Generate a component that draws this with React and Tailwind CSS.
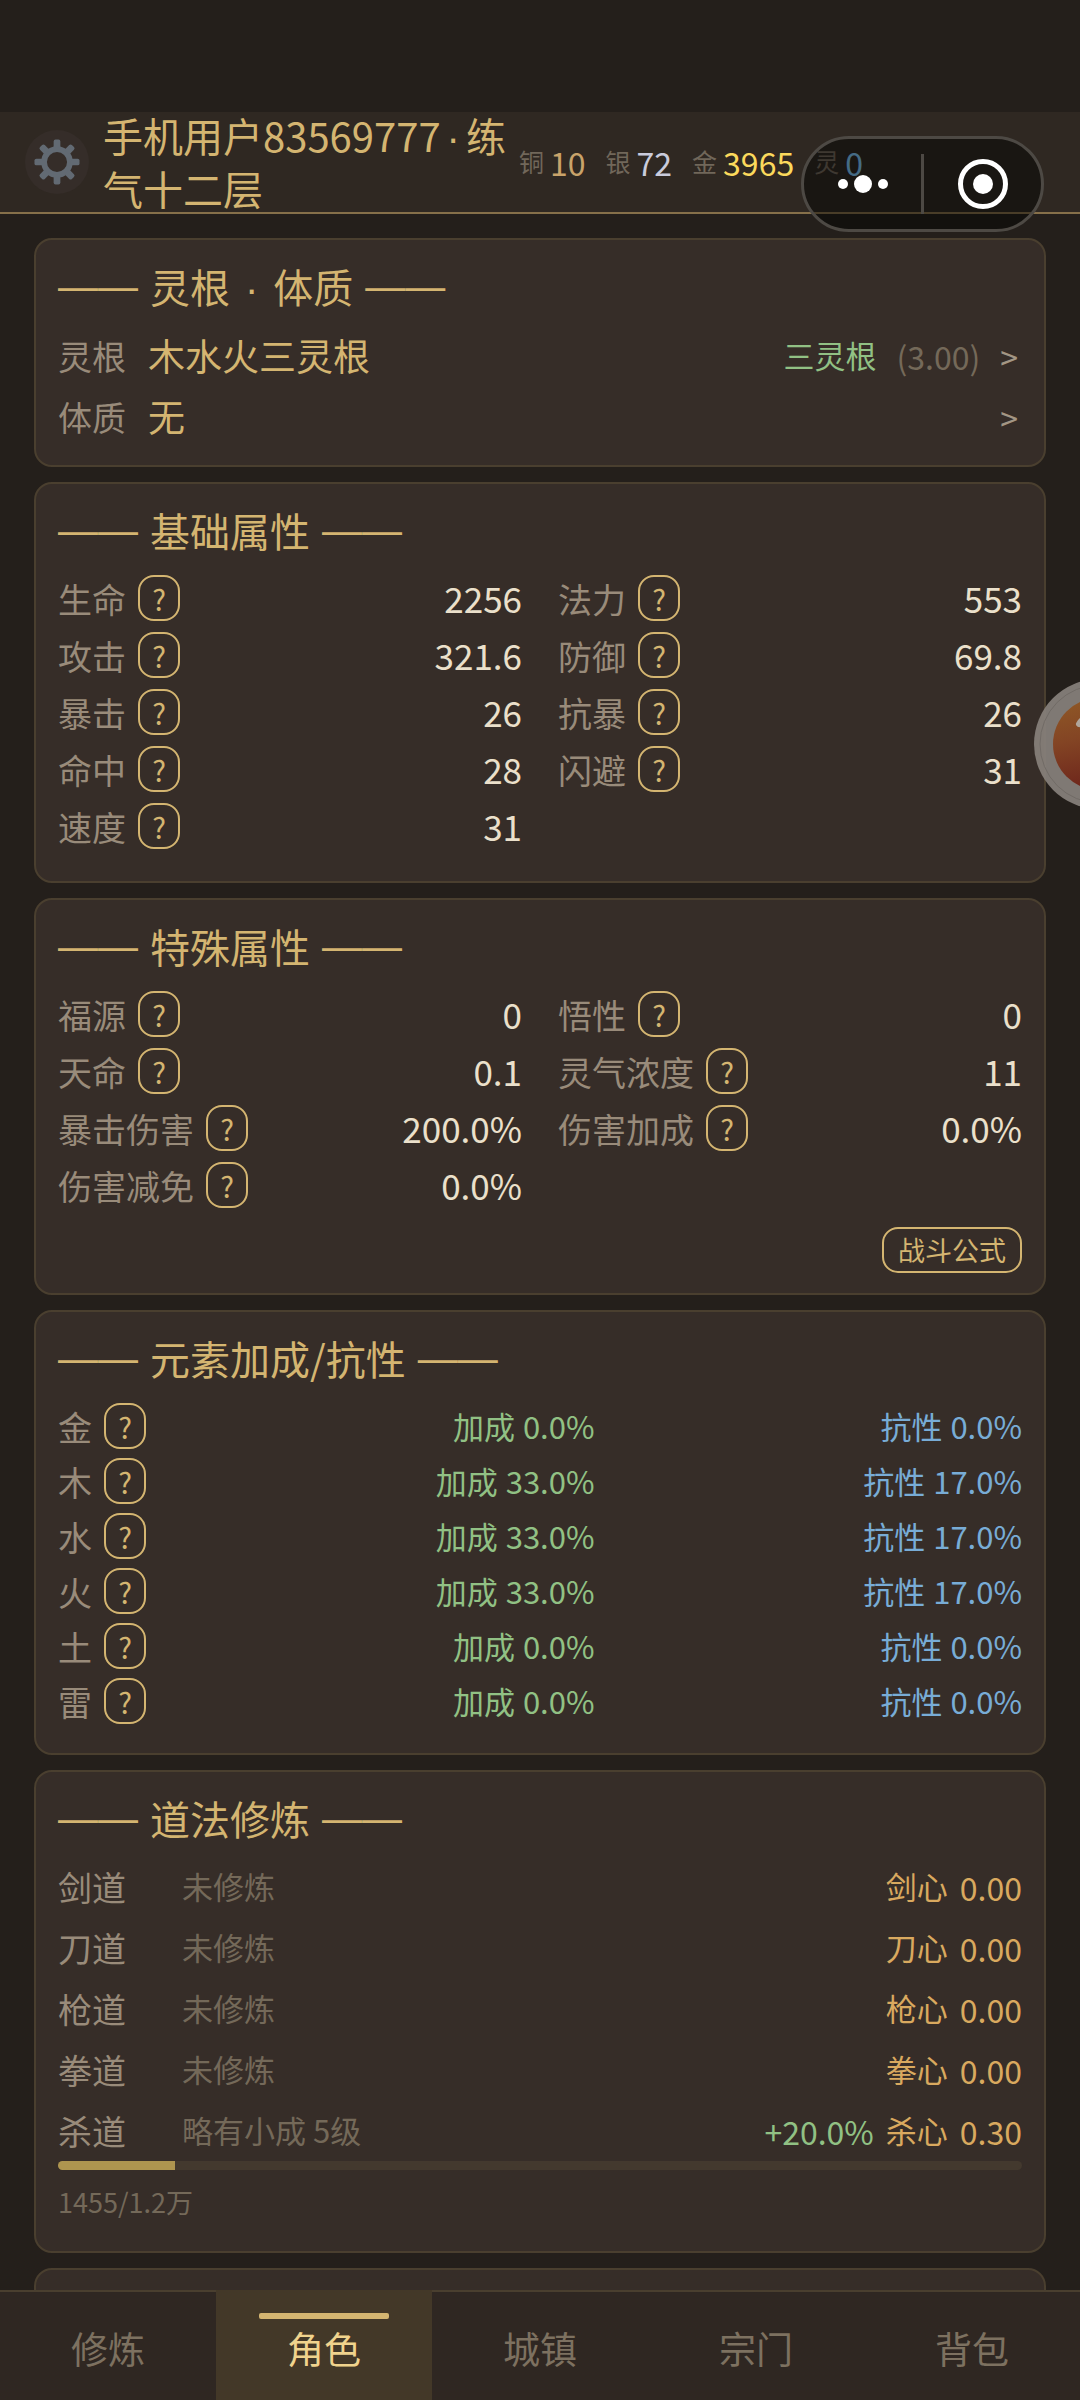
const CURRENCIES = [
  { label: "铜", value: "10", color: "text-[#c9a36a]" },
  { label: "银", value: "72", color: "text-[#c9cbdc]" },
  { label: "金", value: "3965", color: "text-[#fbd95c]" },
  { label: "灵", value: "0", color: "text-[#7ec4f0]" },
];

const BASE_STATS = [
  ["生命", "2256"], ["法力", "553"],
  ["攻击", "321.6"], ["防御", "69.8"],
  ["暴击", "26"], ["抗暴", "26"],
  ["命中", "28"], ["闪避", "31"],
  ["速度", "31"],
];

const SPECIAL_STATS = [
  ["福源", "0"], ["悟性", "0"],
  ["天命", "0.1"], ["灵气浓度", "11"],
  ["暴击伤害", "200.0%"], ["伤害加成", "0.0%"],
  ["伤害减免", "0.0%"],
];

const ELEMENTS = [
  { name: "金", bonus: "0.0%", resist: "0.0%" },
  { name: "木", bonus: "33.0%", resist: "17.0%" },
  { name: "水", bonus: "33.0%", resist: "17.0%" },
  { name: "火", bonus: "33.0%", resist: "17.0%" },
  { name: "土", bonus: "0.0%", resist: "0.0%" },
  { name: "雷", bonus: "0.0%", resist: "0.0%" },
];

const PATHS = [
  { name: "剑道", level: "未修炼", heart: "剑心", value: "0.00" },
  { name: "刀道", level: "未修炼", heart: "刀心", value: "0.00" },
  { name: "枪道", level: "未修炼", heart: "枪心", value: "0.00" },
  { name: "拳道", level: "未修炼", heart: "拳心", value: "0.00" },
  { name: "杀道", level: "略有小成 5级", heart: "杀心", value: "0.30", bonus: "+20.0%" },
];

const TABS = ["修炼", "角色", "城镇", "宗门", "背包"];

function GearIcon() {
  return (
    <svg viewBox="-24 -24 48 48" className="w-[46px] h-[46px]" aria-hidden="true">
      <circle r="13.5" fill="none" stroke="#626a73" strokeWidth="6" />
      {[0, 45, 90, 135, 180, 225, 270, 315].map((deg) => (
        <rect key={deg} x="-3.5" y="-23.5" width="7" height="9" rx="2" fill="#626a73" transform={`rotate(${deg})`} />
      ))}
    </svg>
  );
}

// The CJK font draws a wide middle dot, so it comes from the Latin one
function Dot() {
  return <span className="mx-[6px] leading-none font-['Liberation_Sans',sans-serif]">·</span>;
}

function Dash() {
  return <span className="font-['Liberation_Sans',sans-serif]">——</span>;
}

function Header() {
  return (
    <header className="h-[102px] shrink-0 flex items-center pl-[25px] bg-[#2f2822] border-b-2 border-[#86704a]">
      <button aria-label="设置" className="w-16 h-16 shrink-0 rounded-full bg-[#352d29] flex items-center justify-center">
        <GearIcon />
      </button>
      <h1 className="w-[404px] ml-[14px] text-[40px] leading-[53px] text-[#d4b571]">
        手机用户83569777<Dot />练气十二层
      </h1>
      <ul className="ml-3 flex items-center gap-5">
        {CURRENCIES.map((c) => (
          <li key={c.label} className="flex items-center gap-[6px]">
            <span className="text-[25px] text-[#71675a]">{c.label}</span>
            <span className={`text-[32px] ${c.color}`}>{c.value}</span>
          </li>
        ))}
      </ul>
    </header>
  );
}

// Host app's menu / close pill, floats above the page
function Capsule() {
  return (
    <div className="absolute top-[136px] right-9 w-[243px] h-24 rounded-full border-[3px] border-[#4d4944] bg-black/45 flex items-center">
      <button aria-label="更多" className="flex-1 flex items-center justify-center gap-[6px]">
        <span className="w-[10px] h-[10px] rounded-full bg-white" />
        <span className="w-[18px] h-[18px] rounded-full bg-white" />
        <span className="w-[10px] h-[10px] rounded-full bg-white" />
      </button>
      <span className="w-[3px] h-[60px] bg-[#4d4944]" />
      <button aria-label="关闭" className="flex-1 flex items-center justify-center">
        <span className="w-[50px] h-[50px] rounded-full border-[5px] border-white flex items-center justify-center">
          <span className="w-5 h-5 rounded-full bg-white" />
        </span>
      </button>
    </div>
  );
}

function FloatingBall() {
  return (
    <button aria-label="悬浮球" className="absolute top-[679px] -right-[84px] w-[130px] h-[130px]">
      <svg viewBox="0 0 130 130" className="w-full h-full" aria-hidden="true">
        <defs>
          <linearGradient id="ball" x1="0.2" y1="0" x2="0.4" y2="1">
            <stop offset="0" stopColor="#8f5826" />
            <stop offset="0.45" stopColor="#834424" />
            <stop offset="1" stopColor="#6c241b" />
          </linearGradient>
        </defs>
        <circle cx="65" cy="65" r="65" fill="#86807b" fillOpacity="0.93" />
        <circle cx="65" cy="65" r="59" fill="none" stroke="#716b66" />
        <circle cx="65" cy="65" r="46" fill="url(#ball)" />
        <path d="M45 45 Q47 41 52 39" fill="none" stroke="#b0a69c" strokeWidth="6" strokeLinecap="round" />
      </svg>
    </button>
  );
}

function Card({ title, children }) {
  return (
    <section className="mb-[15px] px-[22px] py-5 shrink-0 rounded-[18px] border-2 border-[#4a3f2f] bg-[#362d28]">
      <h2 className="mb-[19px] flex gap-3 text-[40px] leading-[52px] text-[#d4b571]">
        <Dash />
        <span>{title}</span>
        <Dash />
      </h2>
      {children}
    </section>
  );
}

function Help({ name }) {
  return (
    <button aria-label={`${name}说明`} className="w-[42px] h-[46px] rounded-[16px] border-2 border-[#d4b571] text-[29px] leading-[40px] text-[#d4b571]">
      ?
    </button>
  );
}

function StatGrid({ stats }) {
  return (
    <dl className="grid grid-cols-2 gap-x-9 gap-y-[11px] pb-3">
      {stats.map(([name, value]) => (
        <div key={name} className="h-[46px] flex items-center justify-between">
          <dt className="flex items-center gap-3 text-[34px] text-[#998b7a]">
            {name}
            <Help name={name} />
          </dt>
          <dd className="text-[35px] text-[#ebe0cb]">{value}</dd>
        </div>
      ))}
    </dl>
  );
}

function RootCard() {
  return (
    <Card title={<>灵根 <Dot /> 体质</>}>
      <div className="flex flex-col gap-2">
        <button className="h-[53px] flex items-center pr-1 pb-1">
          <span className="w-[90px] text-left text-[34px] text-[#998b7a]">灵根</span>
          <span className="text-[37px] text-[#d4b571]">木水火三灵根</span>
          <span className="ml-auto text-[31px] text-[#91c184]">三灵根</span>
          <span className="ml-5 text-[32px] text-[#746959]">(3.00)</span>
          <span className="ml-5 text-[32px] text-[#a39684]">&gt;</span>
        </button>
        <button className="h-[53px] flex items-center pr-1 pb-1">
          <span className="w-[90px] text-left text-[34px] text-[#998b7a]">体质</span>
          <span className="text-[37px] text-[#d4b571]">无</span>
          <span className="ml-auto text-[32px] text-[#a39684]">&gt;</span>
        </button>
      </div>
    </Card>
  );
}

function ElementCard() {
  return (
    <Card title="元素加成/抗性">
      <ul className="flex flex-col gap-[9px] pb-[9px]">
        {ELEMENTS.map((el) => (
          <li key={el.name} className="h-[46px] flex items-center justify-between text-[31px]">
            <span className="w-[109px] flex items-center gap-3 text-[34px] text-[#998b7a]">
              {el.name}
              <Help name={el.name} />
            </span>
            <span className="flex gap-2 text-[#91c184]">
              <span>加成</span>
              <span>{el.bonus}</span>
            </span>
            <span className="flex gap-2 text-[#78acd6]">
              <span>抗性</span>
              <span>{el.resist}</span>
            </span>
          </li>
        ))}
      </ul>
    </Card>
  );
}

function PathCard() {
  const exp = 1455;
  const expMax = 12000;

  return (
    <Card title="道法修炼">
      <ul className="flex flex-col gap-3">
        {PATHS.map((p) => (
          <li key={p.name} className="h-[49px] flex items-center pb-[2px] text-[31px]">
            <span className="w-[124px] text-[34px] text-[#998b7a]">{p.name}</span>
            <span className="text-[#746959]">{p.level}</span>
            <span className="ml-auto flex items-center gap-3">
              {p.bonus && <span className="text-[32px] text-[#91c184]">{p.bonus}</span>}
              <span className="text-[#d9a95f]">{p.heart}</span>
              <span className="text-[32px] text-[#d9a95f]">{p.value}</span>
            </span>
          </li>
        ))}
      </ul>
      <div role="progressbar" aria-valuenow={exp} aria-valuemax={expMax} aria-label="杀道进度" className="mt-[5px] h-[9px] rounded-full bg-[#43392e] overflow-hidden">
        <div className="h-full bg-[#ae954f]" style={{ width: `${(exp / expMax) * 100}%` }} />
      </div>
      <p className="mt-3 pb-[9px] text-[27px] leading-[40px] text-[#746959]">1455/1.2万</p>
    </Card>
  );
}

function TabBar() {
  return (
    <nav className="h-[110px] shrink-0 grid grid-cols-5 bg-[#2f2722]">
      {TABS.map((tab) =>
        tab === "角色" ? (
          <a key={tab} href="#" aria-current="page" className="relative pt-2 flex items-center justify-center bg-[#433828] text-[37px] text-[#f0d38d]">
            <span className="absolute top-[23px] left-1/5 right-1/5 h-[6px] rounded-[2px] bg-[#d4b571]" />
            {tab}
          </a>
        ) : (
          <a key={tab} href="#" className="pt-[6px] flex items-center justify-center border-t-2 border-[#4a3f2f] text-[37px] text-[#7d7160]">
            {tab}
          </a>
        )
      )}
    </nav>
  );
}

export default function App() {
  return (
    <div className="relative h-screen flex flex-col overflow-hidden bg-[#241f1b] pt-28 font-['Noto_Sans_CJK_SC',sans-serif]">
      <Header />
      <main className="flex-1 min-h-0 overflow-hidden flex flex-col px-[34px] pt-6">
        <RootCard />
        <Card title="基础属性">
          <StatGrid stats={BASE_STATS} />
        </Card>
        <Card title="特殊属性">
          <StatGrid stats={SPECIAL_STATS} />
          <div className="mt-[7px] flex justify-end">
            <button className="h-[46px] px-[14px] rounded-[16px] border-2 border-[#d4b571] text-[27px] leading-[40px] text-[#d4b571]">战斗公式</button>
          </div>
        </Card>
        <ElementCard />
        <PathCard />
        {/* next card peeks out above the tab bar */}
        <section className="h-40 shrink-0 rounded-[18px] border-2 border-[#4a3f2f] bg-[#362d28]" />
      </main>
      <TabBar />
      <Capsule />
      <FloatingBall />
    </div>
  );
}
